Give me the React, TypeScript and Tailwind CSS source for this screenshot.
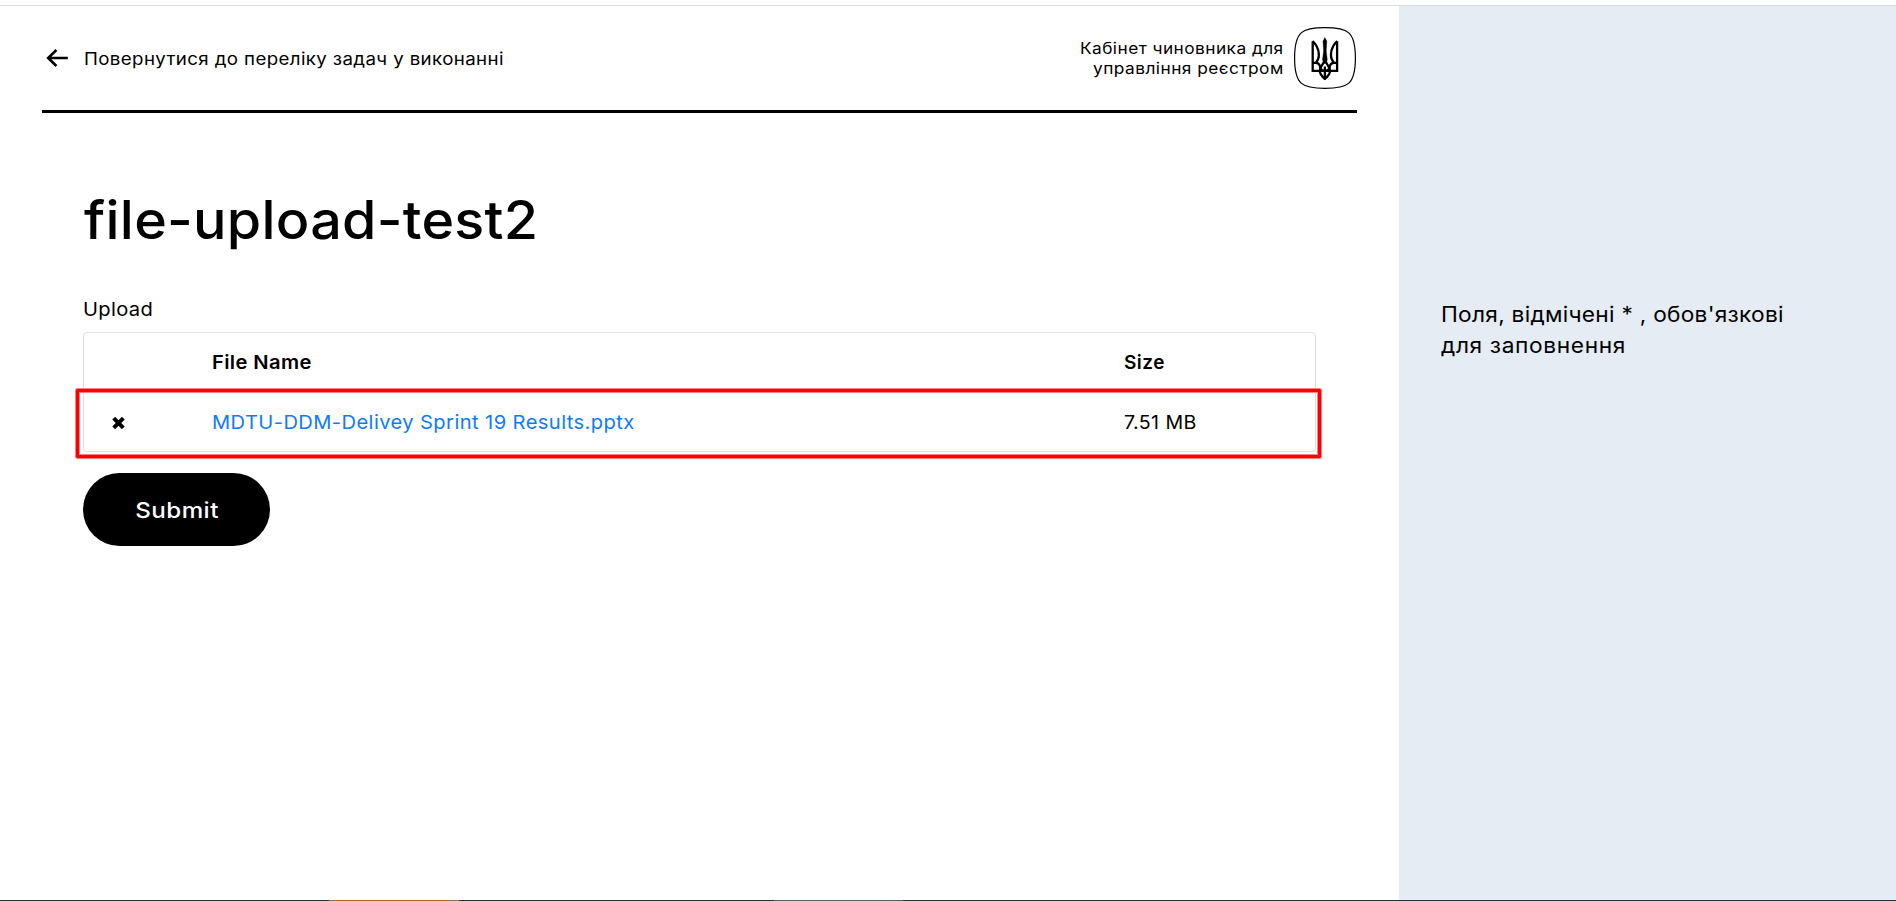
function BackArrow() {
  return (
    <svg width="22" height="18" viewBox="0 0 22 18" fill="none" stroke="currentColor" strokeWidth="2.6">
      <path d="M21.8 9H2.2M10.4 1L2.2 9L10.4 17" />
    </svg>
  );
}

function Trident() {
  return (
    <svg width="62" height="62" viewBox="0 0 62 62" fill="none" stroke="currentColor">
      <path
        d="M31 0.6C54 0.6 61.4 4.5 61.4 31S54 61.4 31 61.4S0.6 57.5 0.6 31S8 0.6 31 0.6Z"
        strokeWidth="1.2"
      />
      <g strokeWidth="2.3" strokeLinejoin="miter">
        <path d="M18.7 14.6V43.9H43.1V14.6" />
        <path d="M18.5 14.2C22.8 18 24.6 22.5 24.8 27C25 30.6 24.2 33.2 22 35.4" />
        <path d="M43.3 14.2C39 18 37.2 22.5 37 27C36.8 30.6 37.6 33.2 39.8 35.4" />
        <path d="M18.7 35.8H22C24.4 35.9 25.6 37.2 25.9 39.2C26.2 42.4 28.2 43.9 30.9 43.9C33.6 43.9 35.6 42.4 35.9 39.2C36.2 37.2 37.4 35.9 39.8 35.8H43.1" />
        <path d="M30.9 32.5C30.1 37 25.8 39 25.8 44C25.8 47.6 28.2 49.7 30.9 51.8C33.6 49.7 36 47.6 36 44C36 39 31.7 37 30.9 32.5Z" />
        <path d="M30.9 39.5V52.6" />
      </g>
      <path d="M30.9 10.6L32.8 14.3L32.2 24L33.3 33L30.9 37L28.5 33L29.6 24L29 14.3Z" fill="currentColor" strokeWidth="0.4" />
    </svg>
  );
}

function RemoveIcon() {
  return (
    <svg width="13" height="12" viewBox="0 0 13 12" stroke="currentColor" strokeWidth="4">
      <path d="M1.7 1.2L11.3 10.8M11.3 1.2L1.7 10.8" />
    </svg>
  );
}

export default function App() {
  return (
    <div className="flex h-[901px] w-[1896px] flex-col overflow-hidden bg-white font-['Inter',sans-serif] text-black">
      <div className="h-[6px] shrink-0 border-b border-[#dcdcde]" />
      <div className="flex min-h-0 grow">
        <main className="w-[1399px] shrink-0 pr-[42px] pl-[42px]">
          <header className="flex h-[107px] items-center justify-between border-b-[3px] border-black pr-px pl-1">
            <a className="flex items-center gap-4">
              <BackArrow />
              <span className="origin-left scale-x-110 pt-px text-[17px] leading-6 tracking-[0.34px]">
                Повернутися до переліку задач у виконанні
              </span>
            </a>
            <div className="flex items-center gap-[10px]">
              <p className="origin-right scale-x-108 text-right text-base leading-5 tracking-[0.42px]">
                Кабінет чиновника для
                <br />
                управління реєстром
              </p>
              <Trident />
            </div>
          </header>

          <section className="pr-[41px] pl-[41px]">
            <h1 className="mt-[75px] origin-left scale-x-105 pl-px text-[53px] leading-[64px] font-medium tracking-[0.25px]">
              file-upload-test2
            </h1>
            <label className="mt-[46px] block origin-left scale-x-106 text-[19px] leading-6 tracking-[0.32px]">Upload</label>
            <div className="relative mt-[10px] h-[120px] rounded border border-[#dfdfdf] text-[19px]">
              <div className="grid h-[58px] grid-cols-[128px_912px_1fr] items-center border-b border-[#dfdfdf] pt-[3px] font-semibold">
                <span />
                <span className="origin-left scale-x-106 tracking-[0.36px]">File Name</span>
                <span className="tracking-[0.5px]">Size</span>
              </div>
              <div className="grid h-[60px] grid-cols-[128px_912px_1fr] items-center pt-[5px]">
                <span className="pb-px pl-[27.5px]">
                  <RemoveIcon />
                </span>
                <a className="origin-left scale-x-106 tracking-[0.38px] text-[#0d7bff]">MDTU-DDM-Delivey Sprint 19 Results.pptx</a>
                <span className="origin-left scale-x-103 tracking-[0.4px]">7.51 MB</span>
              </div>
              <div className="absolute top-[56px] -left-[8px] h-[69px] w-[1245px] rounded-[1px] border-[3px] border-[#ff0000] outline outline-[#ff8080] inset-ring inset-ring-[#ff8080]" />
            </div>
            <button className="mt-[21px] flex h-[73px] w-[187px] items-center justify-center rounded-full bg-black pt-px pl-px text-[22px] font-medium tracking-[0.4px] text-white">
              <span className="scale-x-110">Submit</span>
            </button>
          </section>
        </main>

        <aside className="grow bg-[#e5ecf3] pt-[293px] pl-[42px]">
          <p className="origin-left scale-x-108 text-[21px] leading-[31px]">
            <span className="block tracking-[0.25px]">Поля, відмічені * , обов'язкові</span>
            <span className="block tracking-[0.6px]">для заповнення</span>
          </p>
        </aside>
      </div>
      <div className="flex h-px shrink-0 bg-[#22313a]">
        <div className="ml-[329px] w-[130px] bg-[#a5683b]" />
        <div className="ml-[315px] w-[129px] bg-[#56605f]" />
      </div>
    </div>
  );
}
